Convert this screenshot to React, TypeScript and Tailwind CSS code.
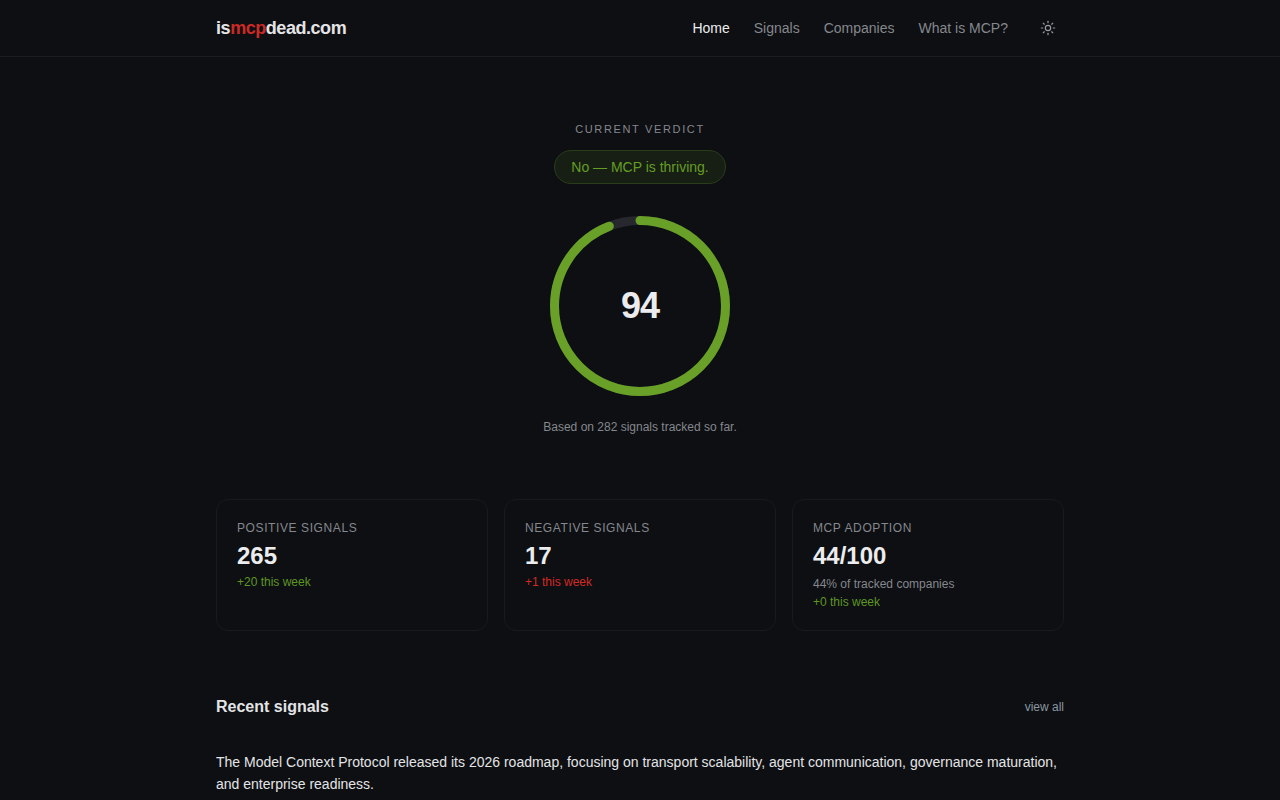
import React from "react";
import { Sun } from "lucide-react";

function Card({ label, value, children }: { label: string; value: string; children: React.ReactNode }) {
  return (
    <div className="h-[132px] rounded-xl border border-[#181a1e] bg-[#0d0f12] px-5 pt-5">
      <div className="text-xs leading-[16px] tracking-[0.6px] text-[#85878e]">{label}</div>
      <div className="mt-1 text-2xl leading-[32px] font-bold text-[#ececee]">{value}</div>
      {children}
    </div>
  );
}

export default function App() {
  const r = 85.5;
  const c = 2 * Math.PI * r;
  return (
    <div className="h-screen overflow-hidden bg-[#0d0f12] font-['Liberation_Sans',Arial,sans-serif] text-[#ececee]">
      <header className="h-[57px] border-b border-[#1a1c20]">
        <div className="mx-auto flex h-14 max-w-[880px] items-center justify-between px-4">
          <div className="text-lg font-bold tracking-[-0.45px] text-[#e4e4e7]">
            is<span className="text-[#cc2a26]">mcp</span>dead.com
          </div>
          <nav className="flex items-center gap-6 text-sm text-[#85878e]">
            <span className="text-[#ececee]">Home</span>
            <span>Signals</span>
            <span>Companies</span>
            <span>What is MCP?</span>
            <span className="ml-2 mr-2 flex">
              <Sun size={16} strokeWidth={1.75} className="text-[#9a9aa2]" />
            </span>
          </nav>
        </div>
      </header>
      <main className="mx-auto max-w-[880px] px-4">
        <section className="flex flex-col items-center pt-[64px]">
          <div className="text-[11px] leading-4 tracking-[1.65px] text-[#85878e]">CURRENT VERDICT</div>
          <div className="mt-[13px] h-[34px] rounded-full border border-[#2a3d1a] bg-[#171f14] px-4 text-sm leading-[32px] text-[#659d24]">
            No — MCP is thriving.
          </div>
          <div className="relative mt-8 h-[180px] w-[180px]">
            <svg width="180" height="180" viewBox="0 0 180 180" className="-rotate-90">
              <circle cx="90" cy="90" r={r} fill="none" stroke="#27282e" strokeWidth="9" />
              <circle
                cx="90"
                cy="90"
                r={r}
                fill="none"
                stroke="#68a028"
                strokeWidth="9"
                strokeLinecap="round"
                strokeDasharray={`${c * 0.94} ${c}`}
              />
            </svg>
            <div className="absolute inset-0 flex items-center justify-center text-4xl font-bold tracking-[-0.9px] text-[#ececee]">94</div>
          </div>
          <p className="mt-[23px] text-xs leading-4 text-[#85878e]">Based on 282 signals tracked so far.</p>
        </section>
        <section className="mt-[64px] grid grid-cols-3 gap-4">
          <Card label="POSITIVE SIGNALS" value="265">
            <div className="mt-[2px] text-xs leading-4 text-[#5f9622]">+20 this week</div>
          </Card>
          <Card label="NEGATIVE SIGNALS" value="17">
            <div className="mt-[2px] text-xs leading-4 text-[#d42a26]">+1 this week</div>
          </Card>
          <Card label="MCP ADOPTION" value="44/100">
            <div className="mt-1 text-xs leading-4 text-[#85878e]">44% of tracked companies</div>
            <div className="mt-[2px] text-xs leading-4 text-[#5f9622]">+0 this week</div>
          </Card>
        </section>
        <section className="mt-[64px]">
          <div className="flex items-center justify-between">
            <h2 className="text-base leading-[24px] font-bold text-[#e4e4e7]">Recent signals</h2>
            <span className="text-xs text-[#8b96a0]">view all</span>
          </div>
          <p className="mt-[32px] text-sm leading-[22px] text-[#e4e4e7]">
            The Model Context Protocol released its 2026 roadmap, focusing on transport scalability, agent communication, governance maturation, and enterprise readiness.
          </p>
        </section>
      </main>
    </div>
  );
}
